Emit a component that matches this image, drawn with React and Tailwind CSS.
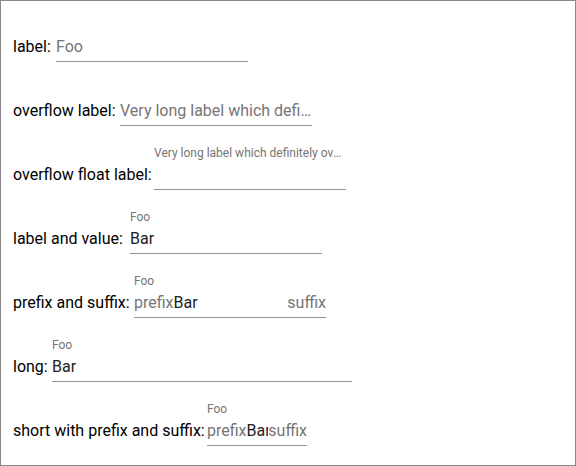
const rows = [
  { label: 'label: ', labelWidth: 'w-[43px]', width: 'w-[192px]', placeholder: 'Foo' },
  { label: 'overflow label: ', labelWidth: 'w-[107px]', width: 'w-[192px]', placeholder: 'Very long label which definitely overflows the field' },
  { label: 'overflow float label: ', labelWidth: 'w-[141px]', width: 'w-[192px]', floatLabel: 'Very long label which definitely overflows the field', value: '' },
  { label: 'label and value: ', labelWidth: 'w-[117px]', width: 'w-[192px]', floatLabel: 'Foo', value: 'Bar' },
  { label: 'prefix and suffix: ', labelWidth: 'w-[121px]', width: 'w-[192px]', floatLabel: 'Foo', value: 'Bar', prefix: 'prefix', suffix: 'suffix' },
  { label: 'long: ', labelWidth: 'w-[39px]', width: 'w-[300px]', floatLabel: 'Foo', value: 'Bar' },
  { label: 'short with prefix and suffix: ', labelWidth: 'w-[194px]', width: 'w-[100px]', floatLabel: 'Foo', value: 'Bar', prefix: 'prefix', suffix: 'suffix' },
];

function Field({ width, placeholder, floatLabel, value, prefix, suffix }) {
  return (
    <div className={`${width} shrink-0 flex flex-col pt-[17px] pb-[4px] border-b border-[#949494]`}>
      <div className="h-[14px] text-[12px] leading-[14px] text-[#757575] truncate">
        {floatLabel || '\u00a0'}
      </div>
      <div className="mt-[5px] h-5 flex items-center leading-5">
        {prefix && <span className="shrink-0 text-[#757575]">{prefix}</span>}
        <div className="flex-1 min-w-0 overflow-hidden whitespace-nowrap">
          {placeholder ? (
            <span className="block truncate text-[#757575]">{placeholder}</span>
          ) : (
            <span className="text-[#212121]">{value}</span>
          )}
        </div>
        {suffix && <span className="shrink-0 text-[#757575]">{suffix}</span>}
      </div>
    </div>
  );
}

export default function App() {
  return (
    <div
      className="w-[576px] h-[466px] border border-[#888] bg-white pl-3 text-[16px] text-[#212121]"
      style={{ fontFamily: 'Roboto, "Liberation Sans", sans-serif' }}
    >
      {rows.map((row, i) => (
        <div key={i} className="flex h-16 items-start">
          <span className={`${row.labelWidth} shrink-0 mt-9 leading-5 whitespace-pre text-black`}>{row.label}</span>
          <Field {...row} />
        </div>
      ))}
    </div>
  );
}
